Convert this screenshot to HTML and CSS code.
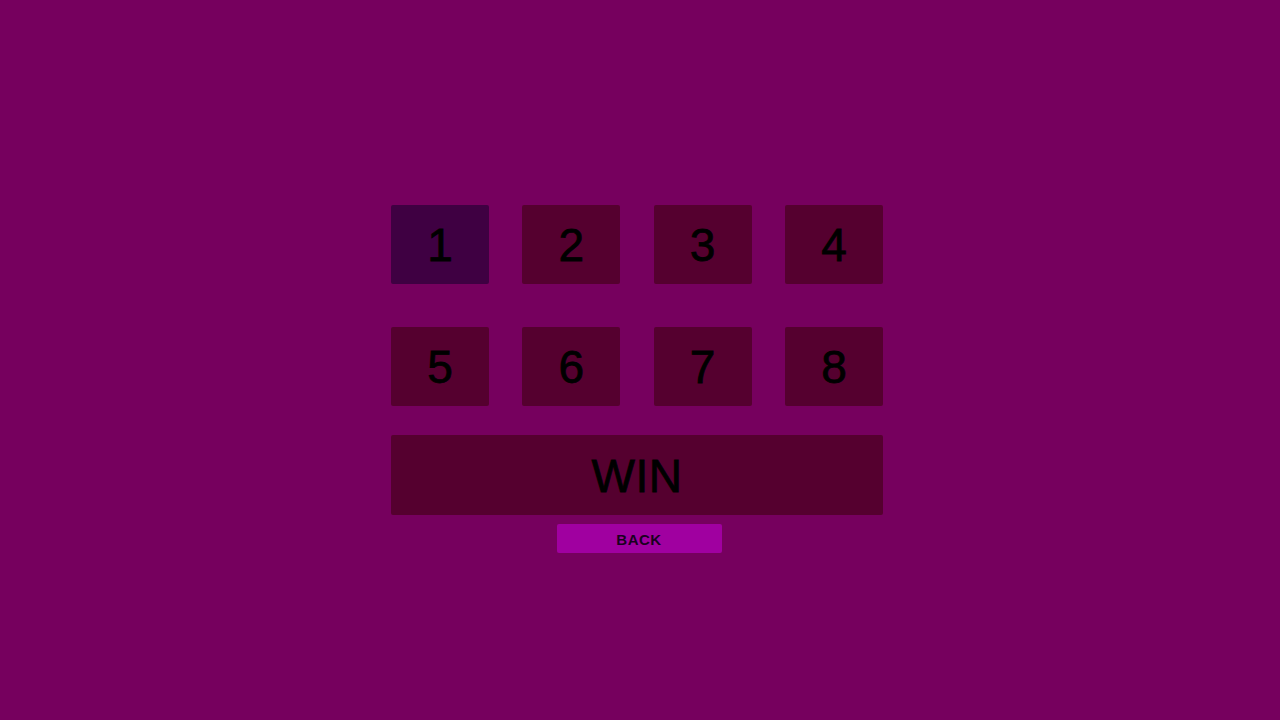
FILE: index.html
```html
<!DOCTYPE html>
<html>
<head>
<meta charset="utf-8">
<link rel="stylesheet" href="styles.css">
</head>
<body>
<main class="board">
  <div class="row">
    <div class="tile tile-active">1</div>
    <div class="tile">2</div>
    <div class="tile">3</div>
    <div class="tile">4</div>
  </div>
  <div class="row row-second">
    <div class="tile">5</div>
    <div class="tile">6</div>
    <div class="tile">7</div>
    <div class="tile">8</div>
  </div>
  <div class="win">WIN</div>
  <div class="back-wrap"><button class="back">BACK</button></div>
</main>
</body>
</html>
```
FILE: styles.css
```css
html, body {
  margin: 0;
  padding: 0;
  width: 1280px;
  height: 720px;
  background: #76005e;
  overflow: hidden;
  font-family: "Liberation Sans", Arial, sans-serif;
}
.board {
  width: 492px;
  margin: 0 auto;
  padding-top: 205px;
  display: flex;
  flex-direction: column;
  transform: translateX(-3px);
}
.row {
  display: flex;
  justify-content: space-between;
}
.row-second {
  margin-top: 43px;
}
.tile {
  width: 98px;
  height: 79px;
  background: #55002f;
  border-radius: 2px;
  color: #000;
  font-size: 46px;
  -webkit-text-stroke: 0.8px #000;
  display: flex;
  align-items: center;
  justify-content: center;
  line-height: 1;
  padding-top: 1px;
  box-sizing: border-box;
}
.tile-active {
  background: #3f0042;
}
.win {
  margin-top: 29px;
  height: 80px;
  background: #55002f;
  border-radius: 2px;
  color: #000;
  font-size: 46px;
  letter-spacing: 0.5px;
  -webkit-text-stroke: 0.8px #000;
  line-height: 1;
  display: flex;
  align-items: center;
  justify-content: center;
  padding-top: 1px;
  box-sizing: border-box;
}
.back-wrap {
  display: flex;
  justify-content: center;
  margin-top: 9px;
  padding-left: 4px;
}
.back {
  width: 165px;
  height: 29px;
  border: none;
  border-radius: 2px;
  background: #a000a0;
  color: #1a0020;
  font-family: "Liberation Sans", Arial, sans-serif;
  font-weight: bold;
  font-size: 15px;
  letter-spacing: 0.5px;
  line-height: 1;
  padding: 1px 0 0;
}
```
